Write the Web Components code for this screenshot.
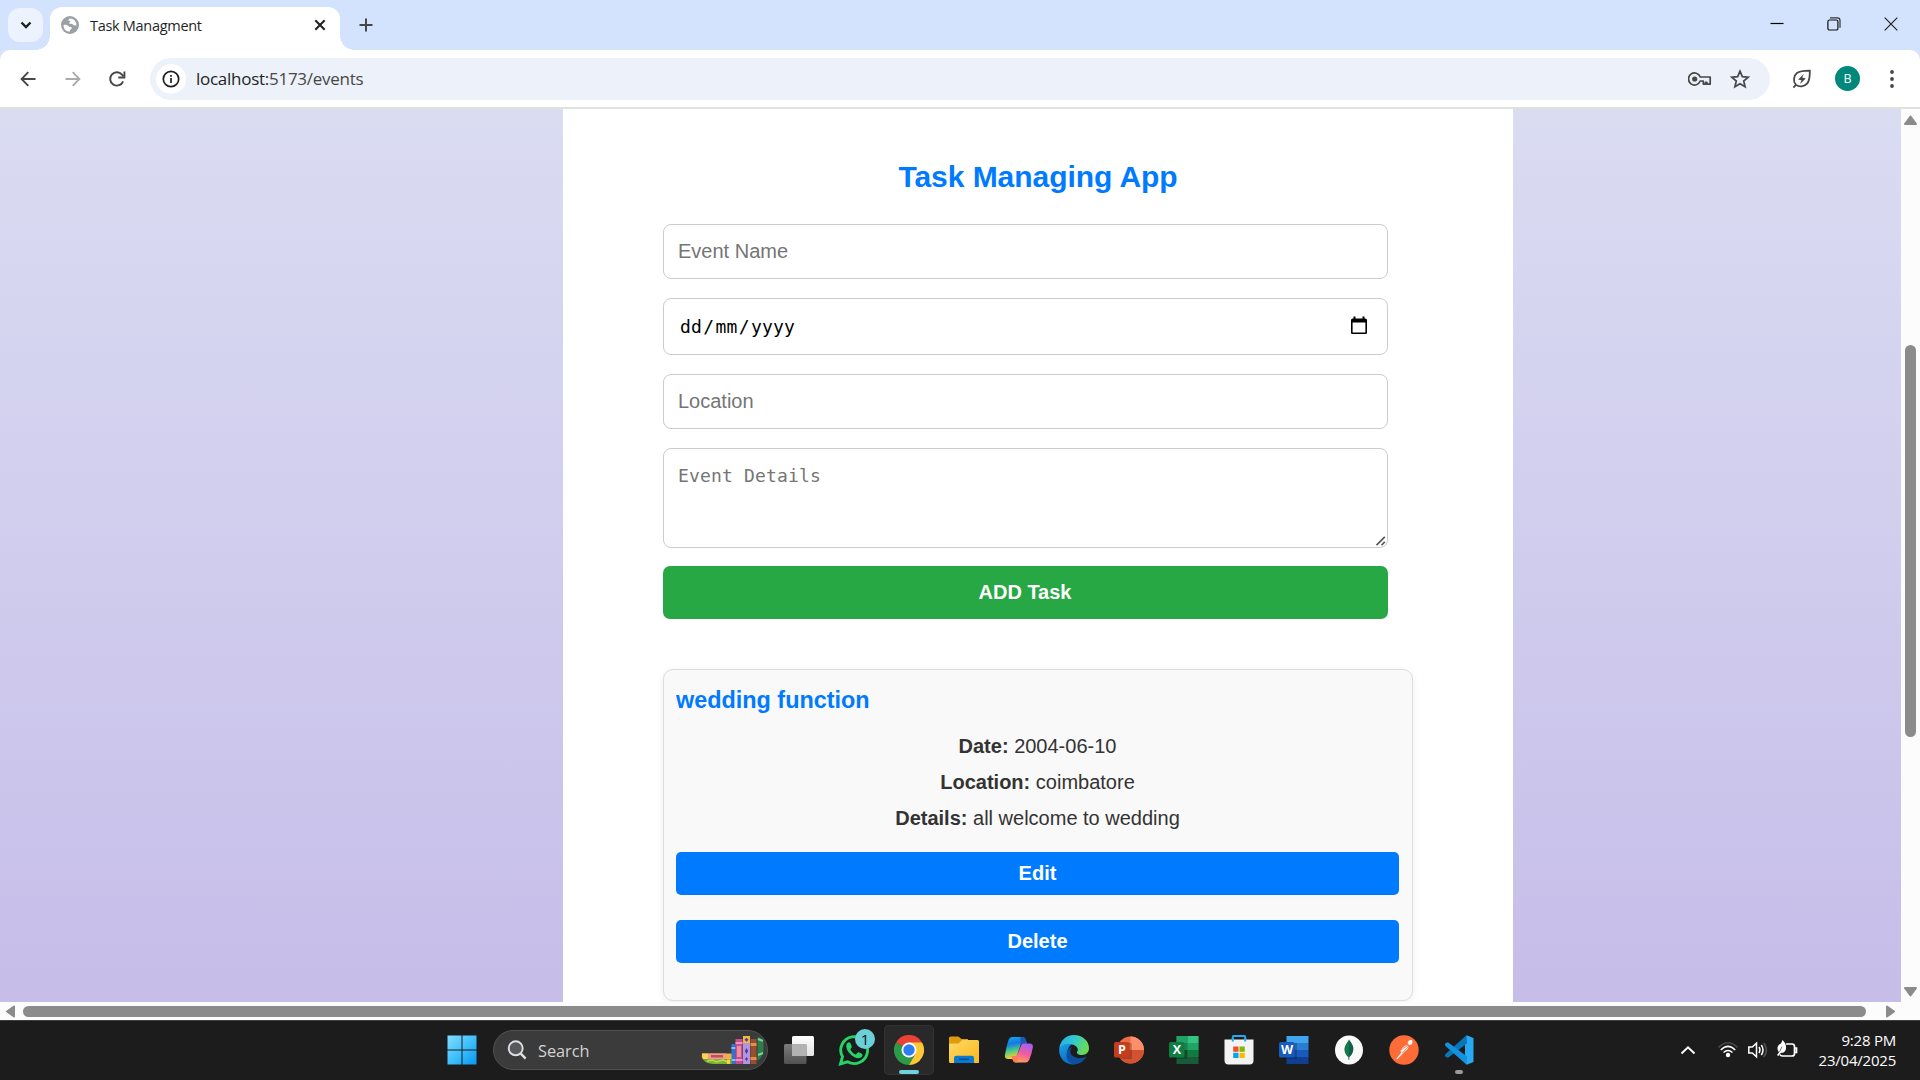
<!DOCTYPE html>
<html lang="en">
<head>
<meta charset="utf-8">
<title>Task Managment</title>
<style>
html,body{margin:0;width:1920px;height:1080px;overflow:hidden}
body{display:flex;flex-direction:column;font-family:"Open Sans","Noto Sans",sans-serif}
</style>
</head>
<body>
<tab-strip></tab-strip>
<tool-bar></tool-bar>
<page-view>
  <task-app>
    <form-field>Event Name</form-field>
    <form-field kind="date"><span>dd</span><span>/</span><span>mm</span><span>/</span><span>yyyy</span></form-field>
    <form-field>Location</form-field>
    <form-field kind="area">Event Details</form-field>
    <app-button kind="add">ADD Task</app-button>
    <event-card slot="events">
      <span slot="name">wedding function</span>
      <span slot="date">2004-06-10</span>
      <span slot="place">coimbatore</span>
      <span slot="details">all welcome to wedding</span>
    </event-card>
  </task-app>
</page-view>
<task-bar></task-bar>
<script>
const define = (name, html) => customElements.define(name, class extends HTMLElement {
  constructor() {
    super();
    const t = document.createElement('template');
    t.innerHTML = html;
    this.attachShadow({mode: 'open'}).append(t.content.cloneNode(true));
  }
});

const icons = {
chevDown: [16,16,`<path d="M3.5 5.5 8 10l4.500-4.500" fill="none" stroke="#1f1f1f" stroke-width="2.300"/>`],
globe: [18,18,`<circle cx="9" cy="9" r="9" fill="#9aa0a6"/><path d="M2.500 9.200c1.500-.6 3.500-.4 4.600.5s1.300 1.200 2.800 1.300c.9.100 1.200.9.600 1.700-.7.800-1.600 1-1.700 2.800-3.600.3-6.400-2.600-6.300-6.300Z" fill="#fff"/><path d="M9 2.400c-1.300.5-1.800 1.200-1.500 2 .5.900 1.900.3 2 1.200.1.800-1.500.8-1.300 1.700.3 1.100 2.600.5 3.800 1.200 1.200.8 1.700 1.400 3.500.8C15.700 5.600 12.600 2.200 9 2.400Z" fill="#fff"/>`],
tabX: [12,12,`<path d="M1.300 1.300l9.400 9.400M10.700 1.300 1.300 10.700" stroke="#1f1f1f" stroke-width="2"/>`],
plus: [14,14,`<path d="M7 .5v13M.5 7h13" stroke="#474747" stroke-width="2"/>`],
min: [14,14,`<path d="M.5 6.500h13" stroke="#000" stroke-width="1.200"/>`],
restore: [14,14,`<rect x=".9" y="3" width="10" height="10" rx="1.600" fill="none" stroke="#111" stroke-width="1.200"/><path d="M3 .9h7.300a2.700 2.700 0 0 1 2.700 2.700V10.800" fill="none" stroke="#333" stroke-width="1.200"/>`],
winX: [14,14,`<path d="M.7.7l12.600 12.600M13.300.7.7 13.300" stroke="#222" stroke-width="1.200"/>`],
back: [16,16,`<path d="M15.500 8H1.800M8.300 1.200 1.600 8l6.700 6.800" fill="none" stroke="#474747" stroke-width="1.900"/>`],
fwd: [16,16,`<path d="M.5 8h13.700M7.700 1.200 14.400 8l-6.700 6.800" fill="none" stroke="#ababab" stroke-width="1.900"/>`],
reload: [18,18,`<path d="M15.100 11.300A6.700 6.700 0 1 1 14 4.600l1.500 1.700" fill="none" stroke="#474747" stroke-width="1.900"/><path d="M16.400 1.400v6.100h-6.100" fill="none" stroke="#474747" stroke-width="1.900"/>`],
info: [18,18,`<circle cx="9" cy="9" r="7.700" fill="none" stroke="#1f1f1f" stroke-width="1.700"/><path d="M9 8v5M9 4.900v1.800" stroke="#1f1f1f" stroke-width="1.700"/>`],
key: [24,16,`<path d="M12.200 6A6 6 0 1 0 12.200 10h3.100v3.100h2.200V11.400h1.400v1.700h3.300V6Z" fill="none" stroke="#474747" stroke-width="1.700" stroke-linejoin="round"/><circle cx="6.700" cy="8" r="2.600" fill="#474747"/>`],
star: [20,20,`<path d="M10 2.200l2.300 5.400 5.900.5-4.500 3.900 1.400 5.800-5.100-3.100-5.100 3.100 1.400-5.800L1.800 8.100l5.900-.5Z" fill="none" stroke="#474747" stroke-width="1.700"/>`],
leaf: [20,20,`<path d="M3.800 15.600C.9 12.300 1.600 6.600 5 4 8.400 1.500 13.500 1.600 17.800 1.600c.1 4.800.2 9.600-2.500 12.700-2.900 3.300-8 4.200-11.500 1.300ZM1.400 18.600l3-3.300" fill="none" stroke="#474747" stroke-width="1.800"/><path d="M11.800 4.900 6.100 10.500l3.400.8-1.600 3.600 5.900-5.500-3.600-.9Z" fill="#474747"/>`],
dots: [6,20,`<circle cx="3" cy="3" r="1.900" fill="#474747"/><circle cx="3" cy="10" r="1.900" fill="#474747"/><circle cx="3" cy="17" r="1.900" fill="#474747"/>`],
cal: [16,19,`<path d="M2.500.5h2v2h7v-2h2v2h.8q1.700 0 1.700 1.600v12.600q0 1.300-1.300 1.300H1.300Q0 18 0 16.700V4.100Q0 2.500 1.700 2.500h.8ZM1.600 6.500v9.900h12.800V6.500Z" fill="#000"/>`],
grip: [10,10,`<path d="M.5 9.200 8.800.9M5.500 9.200 8.800 5.900" stroke="#555" stroke-width="1.600"/>`],
win: [30,30,`<defs><linearGradient id="g" x2="1" y2="1"><stop stop-color="#83dcff"/><stop offset=".5" stop-color="#3fc1fb"/><stop offset="1" stop-color="#0a96f4"/></linearGradient></defs><path d="M.5.500H14.500V14.500H.5ZM15.500.500H29.500V14.500H15.500ZM.5 15.500H14.500V29.500H.5ZM15.500 15.500H29.500V29.500H15.500Z" fill="url(#g)"/>`],
mag: [20,20,`<circle cx="8.700" cy="8.300" r="7" fill="#59595c" stroke="#dcdfe5" stroke-width="1.900"/><path d="M13.600 13.400l5 5.200" stroke="#dcdfe5" stroke-width="2.400"/>`],
books: [64,30,`<path d="M2 18.500h30v6H3Q1 22 2 18.500Z" fill="#f2b23f"/><path d="M2 18.500h6v5.500H3Z" fill="#ffd257"/><rect x="8" y="18.500" width="18" height="6" fill="#f49a8b"/><rect x="11" y="20" width="12" height="2.500" fill="#b9505a"/><path d="M3 24.500h29V29H13Q6 28.500 3 24.500Z" fill="#77b52c"/><path d="M7 26l6-1 3 2 7-2 5 2" fill="none" stroke="#b5dc52" stroke-width="1.400"/><path d="M27 24.500h3V29h-3z" fill="#ffd13e"/><rect x="31.500" y="9" width="4" height="20" fill="#2a76d7"/><rect x="31.500" y="12" width="4" height="2" fill="#86bdfb"/><rect x="31.500" y="24" width="4" height="2" fill="#86bdfb"/><rect x="35.500" y="4" width="7" height="25" fill="#c84d91"/><rect x="35.500" y="7" width="7" height="2" fill="#ef94c2"/><rect x="37" y="11" width="4" height="11" fill="#ed8f9b"/><rect x="35.500" y="24" width="7" height="2" fill="#ef94c2"/><rect x="43" y="1" width="7" height="28" fill="#b294e5"/><rect x="43" y="1" width="7" height="7" fill="#f4b943"/><path d="M46.500 2.800l2 2-2 2-2-2ZM46.500 13l1.700 3-1.700 3-1.700-3ZM46.500 22l1.500 2-1.500 2-1.500-2Z" fill="#5737a1"/><rect x="50.500" y="4" width="6" height="25" fill="#97502f"/><rect x="50.500" y="8" width="6" height="3" fill="#e98b4d"/><rect x="50.500" y="22" width="6" height="3" fill="#e98b4d"/><path d="M57.500 1.700 62.500 4Q64 8 63.500 16 62.500 22 57.500 26Z" fill="#2d7d4c"/><path d="M58 4l5 2M58 20l5-2" stroke="#7bd48d" stroke-width="2"/>`],
taskview: [32,30,`<defs><linearGradient id="g" x2="0" y2="1"><stop stop-color="#fff"/><stop offset="1" stop-color="#e2e2e2"/></linearGradient><linearGradient id="h" x2="0" y2="1"><stop stop-color="#7c7c7c"/><stop offset="1" stop-color="#515151"/></linearGradient></defs><rect x="9" y="1" width="22" height="20" rx="1.500" fill="url(#g)"/><rect x="1" y="9" width="22.500" height="20" rx="1.500" fill="url(#h)"/><path d="M9 9h14.500v12H9z" fill="#b3b3b3"/>`],
wa: [32,32,`<path d="M2.500 29.800 4.500 22.700A13.400 13.400 0 1 1 9.600 27.800Z" fill="none" stroke="#25d366" stroke-width="2.900"/><path d="M11.300 8.300c-1.100-.2-3.100 1.300-3.100 3.700 0 5.400 6.700 12.200 12.200 12.200 2.700 0 4.500-1.900 4-3.700-.2-.7-3.500-2.300-4.200-2.200-.9.200-1.800 2.300-2.500 2.100-2.400-.9-4.300-2.800-5.300-5 -.2-.7 1.500-1.700 1.400-2.500-.2-1.400-1.500-4.500-2.500-4.600Z" fill="#25d366"/>`],
chrome: [30,30,`<path d="M15 15 2 7.500A15 15 0 0 1 28 7.500Z" fill="#ea4335"/><path d="M15 15 2 7.500A15 15 0 0 0 15 30L21.500 18.700Z" fill="#2a9b46"/><path d="M28 7.500A15 15 0 0 1 15 30l6.500-11.300L15 7.500Z" fill="#fcc934"/><circle cx="15" cy="15" r="7.500" fill="#fff"/><circle cx="15" cy="15" r="5.700" fill="#2d7df0"/>`],
folder: [32,30,`<defs><linearGradient id="g" x2="1" y2="1"><stop stop-color="#ffd966"/><stop offset="1" stop-color="#f8b91c"/></linearGradient></defs><path d="M1 3q0-1.600 1.600-1.600h7q1 0 1.800.8l2 1.800H20V14H1Z" fill="#dd9b0d"/><path d="M1 9.500q0-1 1-1h8.500l3.700-3.600h15.300q1.500 0 1.500 1.500V28H2.500Q1 28 1 26.500Z" fill="url(#g)"/><path d="M6 28v-5q0-2.200 2.200-2.200h15.600Q26 20.800 26 23v5Z" fill="#087bd0"/><path d="M11 24.300h10" stroke="#07498f" stroke-width="1.500"/>`],
copilot: [30,28,`<defs><linearGradient id="g" x2=".2" y2="1"><stop stop-color="#0bb4ec"/><stop offset=".35" stop-color="#1677e5"/><stop offset=".65" stop-color="#45c98d"/><stop offset="1" stop-color="#ffd028"/></linearGradient><linearGradient id="h" x1=".7" x2=".3" y2="1"><stop stop-color="#a45ff5"/><stop offset=".5" stop-color="#f35a9d"/><stop offset="1" stop-color="#ffa45c"/></linearGradient></defs><path d="M8 1h10.500q2.500 0 3.200 2.500L23 7.500h-4q-2 0-2.600 2L12.500 21q-.7 2-3 2H4.200Q.2 23 1 18.700 2.600 9.500 4.600 4 5.600 1 8 1Z" fill="url(#g)"/><path d="M16.500 1h2q2.500 0 3.200 2.500L23 7.500h-4q-2 0-2.500 2Z" fill="#2156bd"/><path d="M22 26.500H12q-2.500 0-3.200-2.500L7.500 20H11q2 0 2.600-2L17 9.500q.7-2 3-2h5.500q4 0 3.300 4-1.300 7.500-3.500 12.300-1.200 2.700-3.300 2.700Z" fill="url(#h)"/><path d="M13.500 26.500H12q-2.500 0-3.200-2.500L7.500 20H11q2 0 2.500-2Z" fill="#ff7b55"/>`],
edge: [30,30,`<defs><linearGradient id="g" y2=".3"><stop stop-color="#26acef"/><stop offset=".55" stop-color="#33c9cc"/><stop offset="1" stop-color="#69da58"/></linearGradient><linearGradient id="h" x2=".7" y2="1"><stop stop-color="#1ba1e8"/><stop offset="1" stop-color="#0b5fb6"/></linearGradient></defs><path d="M.3 14C.8 6 6.800 0 15 0 23.500 0 30 6 30 13.200c0 4-3 6.700-7 6.700-3.500 0-6-1.500-4.800-3.500 1.600-3-1-6.500-5.200-7C8 9 3 10.500.3 14Z" fill="url(#g)"/><path d="M.2 14C2.500 9 8 7.800 13 9.300c-4 2.500-5.500 7-4 11.200 2 5.500 8 7.500 14.500 5.500C16 32 4 30 1 20Q0 17 .2 14Z" fill="url(#h)"/><path d="M13 12c-2.500 3-2.200 6.500.5 8.800 3.500 3 9 3.200 14 .8C25 26 20 29.800 14 29.300 9 27 6.500 23 7.700 18Q9 13 13 12Z" fill="#0c4fa0"/><path d="M13.400 13.200c2-2.300 6-.8 5 2.200-1.200 2.600-.5 4 2.600 5.300-5 .6-9.300-3.800-7.600-7.500Z" fill="#1c1c1c"/>`],
ppt: [30,28,`<circle cx="16.500" cy="14" r="13.500" fill="#ed6c47"/><path d="M16.500.5A13.500 13.500 0 0 1 30 14H16.500Z" fill="#ff8f6b"/><path d="M3 14H30A13.500 13.500 0 0 1 3 14Z" fill="#d35230"/><rect x="3" y="7" width="15" height="16" fill="#000" opacity=".2"/><rect x="0" y="6" width="15.500" height="15.500" rx="1.500" fill="#c43e1c"/>`],
xls: [30,28,`<path d="M7.500 0H29.500V28H7.500z" fill="#185c37"/><path d="M7.500 0h11v7h-11zM7.500 7h11v7h-11z" fill="#21a366"/><path d="M18.500 0h11v7h-11z" fill="#33c481"/><path d="M18.500 7h11v7h-11z" fill="#21a366"/><path d="M18.500 14h11v7h-11z" fill="#107c41"/><rect x="3" y="7" width="15" height="16" fill="#000" opacity=".2"/><rect y="6" width="15.500" height="15.500" rx="1.500" fill="#107c41"/>`],
word: [30,28,`<path d="M7.500 0h22v7h-22z" fill="#41a5ee"/><path d="M7.500 7h22v7h-22z" fill="#2b7cd3"/><path d="M7.500 14h22v7h-22z" fill="#185abd"/><path d="M7.500 21h22v7h-22z" fill="#103f91"/><rect x="3" y="7" width="15" height="16" fill="#000" opacity=".2"/><rect y="6" width="15.500" height="15.500" rx="1.500" fill="#185abd"/>`],
store: [30,30,`<path d="M8.800 6.500V2q0-1 1-1h10.400q1 0 1 1v4.500" fill="none" stroke="#25a8ef" stroke-width="2"/><path d="M.5 4.500h29v21q0 4-4 4h-21q-4 0-4-4Z" fill="#f3f3f3"/><path d="M8.800 3v3.500M21.200 3v3.500" stroke="#25a8ef" stroke-width="2"/><path d="M9.200 11.500h5.300v5.300H9.200z" fill="#f25022"/><path d="M15.500 11.500h5.300v5.300h-5.300z" fill="#7fba00"/><path d="M9.200 17.800h5.300V23H9.200z" fill="#00a4ef"/><path d="M15.500 17.800h5.300V23h-5.300z" fill="#ffb900"/>`],
mongo: [30,30,`<ellipse cx="15" cy="15" rx="14" ry="14.500" fill="#f9f9f9"/><path d="M15 4.500c2 3 5 6 4.300 10.500-.4 3.500-2.500 6-3.900 7l-.2 3h-.6l-.3-3c-2-1.500-3.700-4-3.800-7.500C10.500 10 14 7 15 4.500Z" fill="#116149"/><path d="M15 4.500v18c-2.500-1.500-4.400-4.500-4.400-8 .4-4.500 3.400-7 4.400-10Z" fill="#13aa52" opacity=".35"/>`],
postman: [30,30,`<circle cx="15" cy="15" r="14.700" fill="#ff6c37"/><path d="M20 5.500q4-1.500 3.500 2-.5 2.500-3 2.500Q17 9 20 5.500Z" fill="#fff"/><path d="M19.500 10.500q-3-1-6.200 2.400l-2 3 1.200 1.300L7 24.300l1.700-.3 7-7.500q4.500-2.700 3.800-6Z" fill="#fff" opacity=".95"/><path d="M10.500 15.500 20 10M13 18l7-7" stroke="#ff6c37" stroke-width=".7"/>`],
code: [30,30,`<path d="M22.500.2 29.500 3v24l-7 2.800L21 26V4Z" fill="#29a8f3"/><path d="M22.500.2 23 8.500 4 22.800 1.700 22Q.1 20.500 1.500 19Z" fill="#0877b9"/><path d="M1.700 8 4 7.200 23 21.500l-.5 8.300L1.500 11Q.1 9.500 1.700 8Z" fill="#1491dc"/>`],
up: [16,10,`<path d="M1.500 8.500 8 2.200l6.500 6.300" fill="none" stroke="#fff" stroke-width="1.900"/>`],
wifi: [22,18,`<g fill="none" stroke-width="1.500"><path d="M1.500 6.500Q11-3 20.500 6.500" stroke="#4b4b4b"/><path d="M3.800 9Q11 1.800 18.200 9" stroke="#fff"/><path d="M6.500 11.500q4.500-4 9 0" stroke="#fff"/></g><circle cx="11" cy="14" r="2.200" fill="#fff"/>`],
sound: [22,18,`<path d="M1.800 6h3.500L9.500 2.200v13.600L5.300 12H1.800Z" fill="none" stroke="#fff" stroke-width="1.500"/><path d="M12 6q2 3 0 6M14.300 4q3.500 5 0 10" fill="none" stroke="#fff" stroke-width="1.500"/><path d="M16.700 2q5.500 7 0 14" fill="none" stroke="#555" stroke-width="1.500"/>`],
batt: [22,20,`<path d="M10 4h6q2.500 0 2.500 2.500v7q0 2.500-2.500 2.500H6.500q-2 0-2.500-1.500M19 8h1.500v4.500H19" fill="none" stroke="#fff" stroke-width="1.700"/><path d="M6.500 0q4.500 4 3.300 9.500-1.300 3.700-4.800 3.300L2.300 16 1 15l2-2.500Q-1 6 5 3.500Z" fill="#fff"/><path d="M6 6.500 3.500 12" stroke="#555" stroke-width=".8"/>`]
};

customElements.define('x-icon', class extends HTMLElement {
  connectedCallback() {
    if (this.shadowRoot) return;
    const [w, h, body] = icons[this.getAttribute('name')];
    this.attachShadow({mode: 'open'}).innerHTML =
      `<style>:host{display:block;flex:none;width:${w}px;height:${h}px}svg{display:block}</style><svg width="${w}" height="${h}" viewBox="0 0 ${w} ${h}">${body}</svg>`;
  }
});

define('tab-strip', `<style>
:host{display:flex;flex:none;height:50px;background:#d3e3fd;align-items:flex-start}
.menu{width:35px;height:34px;margin:8px 7px 0 8px;border-radius:12px;background:#ecf3fe;display:flex;align-items:center;justify-content:center}
.tab{position:relative;box-sizing:border-box;width:290px;height:43px;margin-top:7px;padding:0 14px 7px 11px;border-radius:12px 12px 0 0;background:#fff;display:flex;align-items:center}
.tab::before,.tab::after{content:"";position:absolute;bottom:0;width:14px;height:14px}
.tab::before{left:-14px;background:radial-gradient(circle at 0 0,transparent 13.500px,#fff 14px)}
.tab::after{right:-14px;background:radial-gradient(circle at 100% 0,transparent 13.500px,#fff 14px)}
.t{flex:1;margin-left:11px;padding-top:1px;font-size:14.500px;line-height:20px;letter-spacing:-.3px;color:#1f1f1f;white-space:nowrap}
.plus{margin:18px 0 0 19px}
.ctl{margin:17px 22px 0 auto;display:flex;gap:43px}
</style>
<div class="menu"><x-icon name="chevDown"></x-icon></div>
<div class="tab"><x-icon name="globe"></x-icon><span class="t">Task Managment</span><x-icon name="tabX"></x-icon></div>
<x-icon class="plus" name="plus"></x-icon>
<div class="ctl"><x-icon name="min"></x-icon><x-icon name="restore"></x-icon><x-icon name="winX"></x-icon></div>`);

define('tool-bar', `<style>
:host{display:block;flex:none;height:59px;background:#d3e3fd}
.bar{box-sizing:border-box;height:59px;border-radius:10px 10px 0 0;background:#fff;border-bottom:2px solid #dfe1df;display:flex;align-items:center;padding-left:20px}
.fwd{margin-left:29px}.rel{margin-left:27px}
.box{box-sizing:border-box;width:1620px;height:42px;margin-left:24px;border-radius:21px;background:#ecf1fa;display:flex;align-items:center;padding:0 20px 0 6px}
.i{width:30px;height:30px;border-radius:50%;background:#fff;display:flex;align-items:center;justify-content:center}
.u{flex:1;margin-left:10px;padding-top:1px;font-size:17px;line-height:24px;letter-spacing:-.27px;color:#474747;white-space:nowrap}
.u b{font-weight:400;color:#1f1f1f}
.star{margin-left:18px}
.leaf{margin-left:22px}
.av{width:25px;height:25px;margin-left:23px;border-radius:50%;background:#00897b;color:#fff;font:12.500px/25px "Open Sans",sans-serif;text-align:center}
.dots{margin-left:29px}
</style>
<div class="bar"><x-icon name="back"></x-icon><x-icon class="fwd" name="fwd"></x-icon><x-icon class="rel" name="reload"></x-icon>
<div class="box"><div class="i"><x-icon name="info"></x-icon></div><span class="u"><b>localhost:</b>5173/events</span><x-icon name="key"></x-icon><x-icon class="star" name="star"></x-icon></div>
<x-icon class="leaf" name="leaf"></x-icon><div class="av">B</div><x-icon class="dots" name="dots"></x-icon></div>`);

define('page-view', `<style>
:host{display:grid;flex:none;height:911px;grid-template:893px 18px/1901px 19px;background:#fcfcfc}
.view{overflow:hidden;background:linear-gradient(#dadcf2,#c6bde9)}
.v,.h{display:flex;align-items:center}
.v{flex-direction:column;padding:6px 0 5px}
.h{padding:1px 6px 0;width:1889px;}
.v i,.h i{background:#8b8b8b;border-radius:6px}
.v i{width:11px;height:392px;margin-top:220px}
.h i{height:11px;width:1843px;margin-left:8px}
svg{display:block;fill:#8b8b8b;stroke:#8b8b8b;stroke-width:2;stroke-linejoin:round}
.dn{margin-top:auto}.r{margin-left:20px}
</style>
<div class="view"><slot></slot></div>
<div class="v"><svg width="13" height="10"><path d="M6.500 1.500 12 9H1Z"/></svg><i></i><svg class="dn" width="13" height="10"><path d="M6.500 8.500 12 1H1Z"/></svg></div>
<div class="h"><svg width="9" height="13"><path d="M1 6.500 8 1.500v10Z"/></svg><i></i><svg class="r" width="9" height="13"><path d="M8 6.500 1 1.500v10Z"/></svg></div>`);

define('task-app', `<style>
:host{display:block;box-sizing:border-box;width:950px;height:893px;margin-left:563px;padding:50px 100px 0;background:#fff;font-family:"Liberation Sans",Arial,sans-serif}
h2{margin:0 0 29px;font-size:30px;line-height:36px;letter-spacing:-.05px;text-align:center;color:#007bff}
form{display:flex;flex-direction:column;width:725px;margin-bottom:50px}
</style><h2>Task Managing App</h2><form><slot></slot></form><slot name="events"></slot>`);

define('form-field', `<style>
:host{display:flex;box-sizing:border-box;width:725px;height:55px;margin-bottom:19px;padding:0 15px 0 14px;border:1px solid #ccc;border-radius:8px;background:#fff;color:#757575;font-size:20px;line-height:53px;align-items:flex-start;justify-content:space-between}
.txt{display:flex;white-space:pre}
.cal,.grip{display:none}
:host([kind=date]){height:57px;color:#000;font:18px/56px "DejaVu Sans Mono",monospace}
:host([kind=date]) .txt{letter-spacing:.16px;gap:1.250px;padding-left:2px}
:host([kind=date]) .cal{display:block;margin:17px 5px 0 0}
:host([kind=area]){height:100px;margin-bottom:18px;padding-right:1px;font:18px/54px "DejaVu Sans Mono",monospace;letter-spacing:.16px}
:host([kind=area]) .grip{display:block;align-self:flex-end;margin-bottom:1px}
</style><div class="txt"><slot></slot></div><x-icon class="cal" name="cal"></x-icon><x-icon class="grip" name="grip"></x-icon>`);

define('app-button', `<style>
:host{display:block;box-sizing:border-box;height:43px;border-radius:5px;background:#007bff;color:#fff;font-weight:700;font-size:20px;line-height:42px;text-align:center}
:host([kind=add]){height:53px;padding-right:1px;border-radius:7px;background:#28a745;line-height:52px}
</style><slot></slot>`);

define('event-card', `<style>
:host{display:block;box-sizing:border-box;width:750px;height:332px;padding:16px 13px 0 12px;border:1px solid #ddd;border-radius:10px;background:#f9f9f9;box-shadow:0 2px 7px rgba(0,0,0,.07);color:#333;font-size:20px}
h3{margin:0 0 20px;font-size:23.400px;line-height:28px;color:#007bff}
p{margin:0;height:36px;line-height:24px;text-align:center}
.e{margin:10px 0 25px}
</style><h3><slot name="name"></slot></h3>
<p><strong>Date:</strong> <slot name="date"></slot></p>
<p><strong>Location:</strong> <slot name="place"></slot></p>
<p><strong>Details:</strong> <slot name="details"></slot></p>
<app-button class="e">Edit</app-button><app-button>Delete</app-button>`);

define('task-slot', `<style>
:host{position:relative;display:flex;flex:none;box-sizing:border-box;width:50px;height:50px;align-items:center;justify-content:center}
:host([active]){background:#292929;border-radius:5px;box-shadow:inset 0 0 0 1px #333}
:host([active])::after,:host([open])::after{content:"";position:absolute;bottom:1px;width:20px;height:4px;border-radius:2px;background:#6fd3dc}
:host([open])::after{width:8px;background:#9a9a9a}
::slotted(b){position:absolute;left:11px;top:17px;width:14px;text-align:center;color:#fff;font:700 12.500px/16px "Open Sans",sans-serif}
::slotted(em){position:absolute;left:26px;top:4px;width:20px;height:20px;border-radius:50%;background:#6cd0d9;color:#111;font:15px/20px "Open Sans",sans-serif;text-align:center}
</style><slot></slot>`);

define('task-bar', `<style>
:host{display:flex;flex:none;box-sizing:border-box;height:60px;background:#1c1c1c;border-top:1px solid #3d3d3d;padding:4px 0 0 437px;gap:5px;align-items:flex-start}
.s{box-sizing:border-box;width:275px;height:40px;margin:5px 1px 0 1px;padding:0 3px 0 13px;border-radius:20px;background:#3b3b3b;border:1px solid #515151;display:flex;align-items:center;color:#d3d3d3;font-size:16.300px}
.s span{flex:1;margin-left:11px;padding-top:1px}
.tray{margin-left:auto;display:flex;align-items:center;height:50px;padding-right:24px}
.c{width:80px;margin-left:18px;text-align:right;color:#fff;font-size:15px;line-height:20.500px;letter-spacing:-.22px;white-space:nowrap}
</style>
<task-slot><x-icon name="win"></x-icon></task-slot>
<div class="s"><x-icon name="mag"></x-icon><span>Search</span><x-icon name="books"></x-icon></div>
<task-slot><x-icon name="taskview"></x-icon></task-slot>
<task-slot><x-icon name="wa"></x-icon><em>1</em></task-slot>
<task-slot active><x-icon name="chrome"></x-icon></task-slot>
<task-slot><x-icon name="folder"></x-icon></task-slot>
<task-slot><x-icon name="copilot"></x-icon></task-slot>
<task-slot><x-icon name="edge"></x-icon></task-slot>
<task-slot><x-icon name="ppt"></x-icon><b>P</b></task-slot>
<task-slot><x-icon name="xls"></x-icon><b>X</b></task-slot>
<task-slot><x-icon name="store"></x-icon></task-slot>
<task-slot><x-icon name="word"></x-icon><b>W</b></task-slot>
<task-slot><x-icon name="mongo"></x-icon></task-slot>
<task-slot><x-icon name="postman"></x-icon></task-slot>
<task-slot open><x-icon name="code"></x-icon></task-slot>
<div class="tray"><x-icon name="up"></x-icon><x-icon name="wifi" style="margin-left:21px"></x-icon><x-icon name="sound" style="margin-left:8px"></x-icon><x-icon name="batt" style="margin-left:7px"></x-icon><div class="c">9:28 PM<br>23/04/2025</div></div>`);
</script>
</body>
</html>
